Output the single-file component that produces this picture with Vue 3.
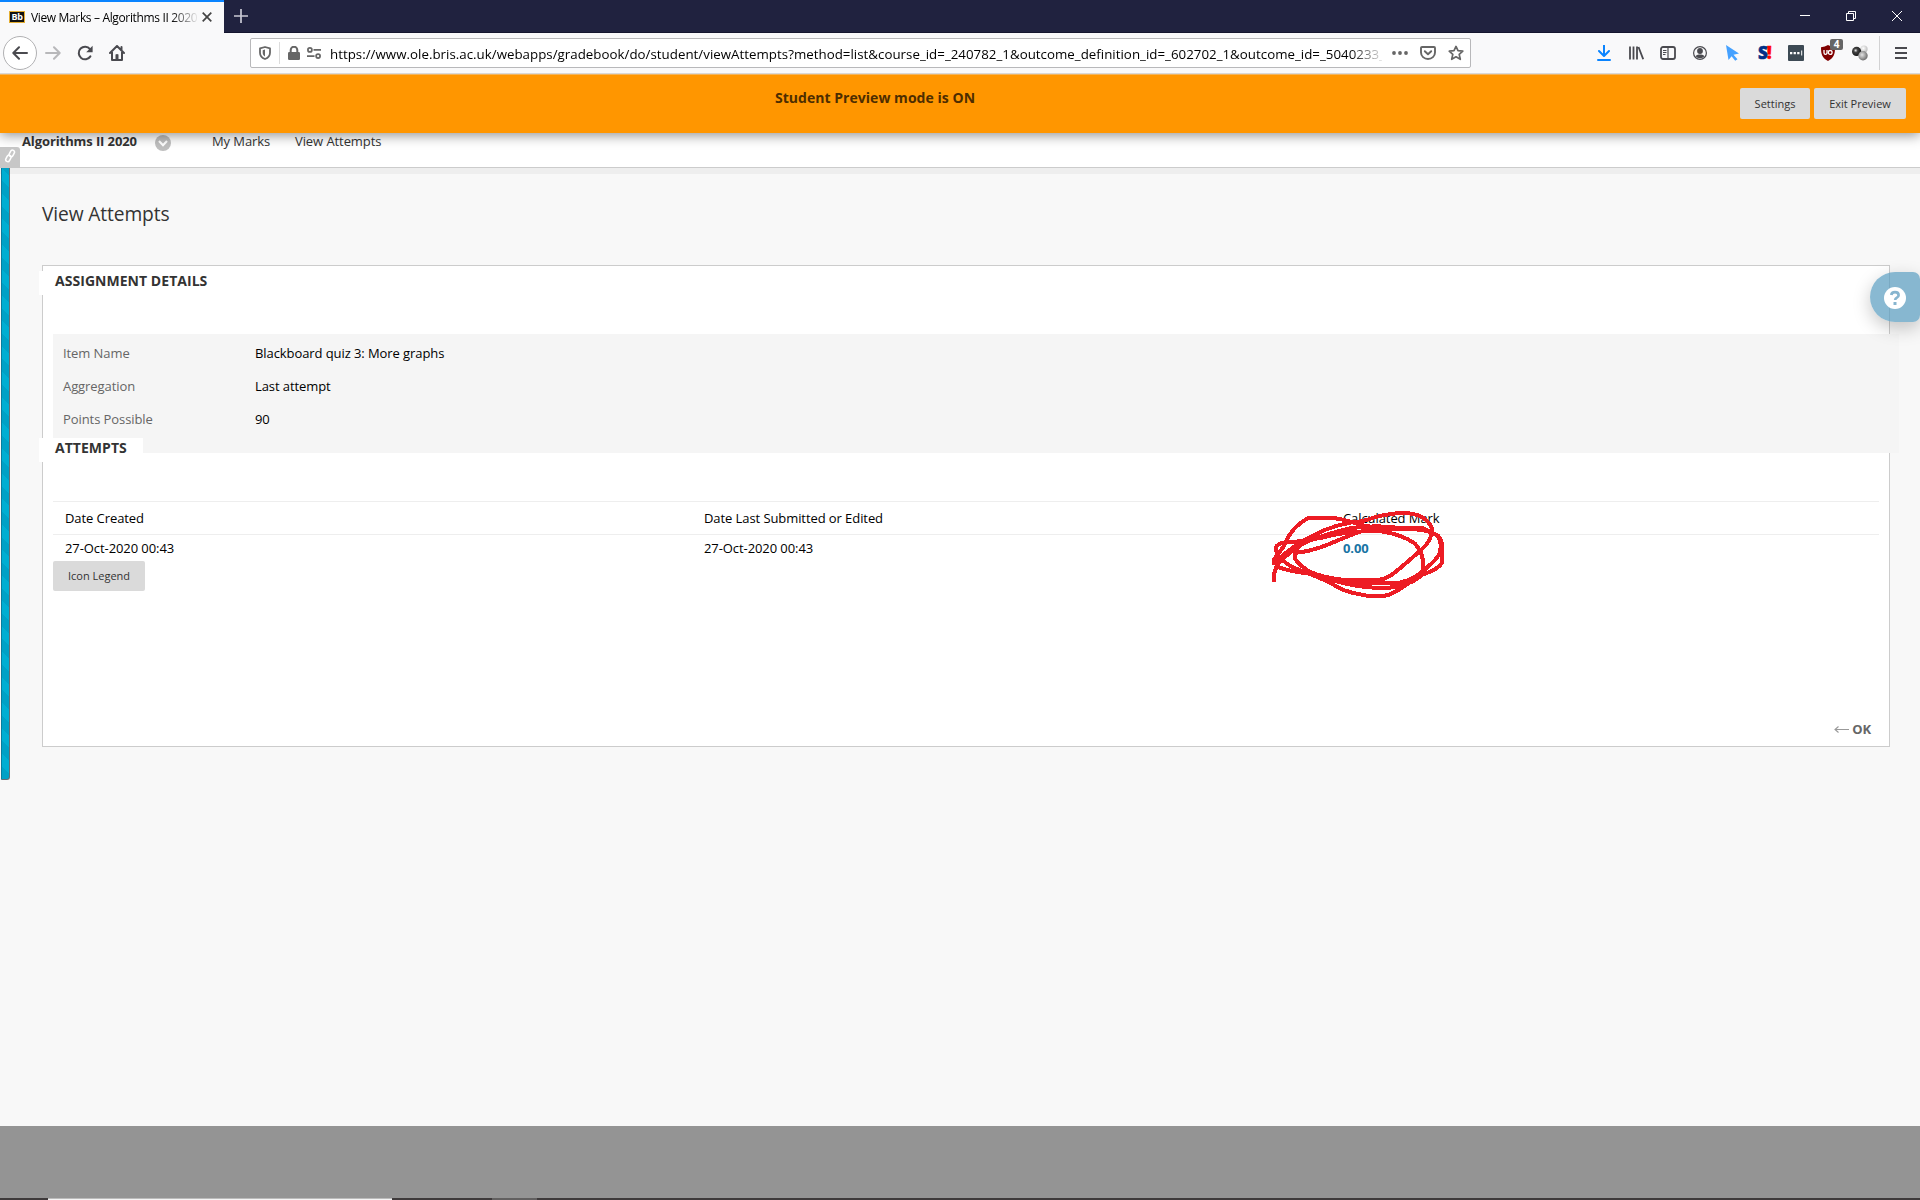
<script setup>
const details = [
  { label: 'Item Name', value: 'Blackboard quiz 3: More graphs' },
  { label: 'Aggregation', value: 'Last attempt' },
  { label: 'Points Possible', value: '90' },
]
const attempts = [
  { created: '27-Oct-2020 00:43', edited: '27-Oct-2020 00:43', mark: '0.00' },
]
const url =
  'https://www.ole.bris.ac.uk/webapps/gradebook/do/student/viewAttempts?method=list&course_id=_240782_1&outcome_definition_id=_602702_1&outcome_id=_5040233_'
</script>

<template>
  <div class="window">
    <header class="titlebar">
      <div class="tab">
        <span class="favicon">Bb</span>
        <span class="tab-title">View Marks – Algorithms II 2020</span>
        <svg class="tab-close" width="10" height="10" viewBox="0 0 10 10"><path d="M.7.7l8.6 8.6M9.3.7L.7 9.3" stroke="#444" stroke-width="1.7" /></svg>
      </div>
      <svg class="new-tab" width="14" height="14" viewBox="0 0 14 14"><path d="M7 0v14M0 7h14" stroke="#c9c9d4" stroke-width="1.7" /></svg>
      <div class="win-controls">
        <svg width="10" height="10" viewBox="0 0 10 10"><path d="M0 4.5h10" stroke="#fff" /></svg>
        <svg width="10" height="10" viewBox="0 0 10 10"><path d="M2.5 2V.5h7v7H8M.5 2.5h7v7h-7z" fill="none" stroke="#fff" /></svg>
        <svg width="10" height="10" viewBox="0 0 10 10"><path d="M0 0l10 10M10 0L0 10" stroke="#fff" /></svg>
      </div>
    </header>

    <nav class="toolbar">
      <div class="nav-buttons">
        <span class="back"><svg width="16" height="16" viewBox="0 0 16 16"><path d="M15 8H1.5M7 2.3L1.3 8 7 13.7" fill="none" stroke="#4a4a4f" stroke-width="2" stroke-linecap="round" stroke-linejoin="round" /></svg></span>
        <svg class="fwd" width="16" height="16" viewBox="0 0 16 16"><path d="M1 8h13.5M9 2.3L14.7 8 9 13.7" fill="none" stroke="#b8b8ba" stroke-width="2" stroke-linecap="round" stroke-linejoin="round" /></svg>
        <svg class="reload" width="16" height="16" viewBox="0 0 16 16"><path d="M13.4 11.4A6.3 6.3 0 1 1 13 4.1" fill="none" stroke="#4a4a4f" stroke-width="2" stroke-linecap="round" /><path d="M15.6.8v6.4H9.2z" fill="#4a4a4f" /></svg>
        <svg class="home" width="16" height="16" viewBox="0 0 16 16"><path d="M1 8l7-7 7 7M3 7v8h10V7M12.5 2v3" fill="none" stroke="#4a4a4f" stroke-width="2" stroke-linecap="round" stroke-linejoin="round" /><path d="M6.5 15V9.5q1.5-1 3 0V15z" fill="#4a4a4f" /></svg>
      </div>
      <div class="urlbar">
        <svg class="shield" width="12" height="14" viewBox="0 0 12 14"><path d="M6 1L11 2.4v4.3c0 3-2 5.200-5 6.300C3 11.900 1 9.700 1 6.700V2.400z" fill="none" stroke="#666" stroke-width="1.8" stroke-linejoin="round" /><path d="M6 3.500L3.700 4.200v2.600C3.700 8.500 4.500 9.700 6 10.500z" fill="#666" /></svg>
        <i class="url-sep"></i>
        <svg class="lock" width="12" height="14" viewBox="0 0 12 14"><path d="M2.700 7V4a3.300 3.300 0 0 1 6.600 0v3" fill="none" stroke="#666" stroke-width="2" /><rect y="6" width="12" height="8" rx="1.200" fill="#666" /></svg>
        <svg class="perms" width="14" height="12" viewBox="0 0 14 12"><g fill="none" stroke="#666" stroke-width="1.700"><circle cx="2.900" cy="2.900" r="2" /><circle cx="11.100" cy="9.100" r="2" /><path d="M6.500 2.900H14M0 9.100h7.500" /></g></svg>
        <span class="url">{{ url }}</span>
        <svg class="dots" width="16" height="4" viewBox="0 0 16 4" fill="#666"><circle cx="2" cy="2" r="1.900" /><circle cx="8" cy="2" r="1.900" /><circle cx="14" cy="2" r="1.900" /></svg>
        <svg class="pocket" width="16" height="14" viewBox="0 0 16 14"><path d="M2 1h12a1 1 0 0 1 1 1v4.500a7 6.500 0 0 1-14 0V2a1 1 0 0 1 1-1z" fill="none" stroke="#666" stroke-width="1.900" /><path d="M4.800 5.200L8 8.300l3.200-3.100" fill="none" stroke="#666" stroke-width="1.900" stroke-linecap="round" stroke-linejoin="round" /></svg>
        <svg class="star" width="16" height="16" viewBox="0 0 16 16"><path d="M8 1.400l2 4.300 4.800.5-3.600 3.200 1.100 4.900L8 11.800l-4.300 2.500 1.100-4.900L1.200 6.200 6 5.700z" fill="none" stroke="#666" stroke-width="1.700" stroke-linejoin="round" /></svg>
      </div>
      <div class="tools">
        <svg width="16" height="16" viewBox="0 0 16 16"><path d="M8 .5v10M3 6l5 5 5-5M2 15h12" fill="none" stroke="#0a84ff" stroke-width="2" stroke-linecap="round" stroke-linejoin="round" /></svg>
        <svg width="16" height="16" viewBox="0 0 16 16"><path d="M2 1.500v13M5.500 1.500v13M9 1.500v13M10.500 2l4.700 12.300" fill="none" stroke="#4a4a4f" stroke-width="1.800" /></svg>
        <svg width="16" height="16" viewBox="0 0 16 16"><g fill="none" stroke="#4a4a4f"><rect x="1" y="2" width="14" height="12" rx="2" stroke-width="1.800" /><path d="M8 2v12M3 5.500h3.500M3 7.500h3.500M3 9.500h2.500" stroke-width="1.200" /></g></svg>
        <svg width="16" height="16" viewBox="0 0 16 16"><circle cx="8" cy="8" r="6.400" fill="none" stroke="#4a4a4f" stroke-width="1.200" /><circle cx="8" cy="6" r="2.900" fill="#4a4a4f" /><path d="M3.500 11.200Q5 9 8 9.600 11 9 12.500 11.200 10.800 13.300 8 13.300T3.500 11.200z" fill="#4a4a4f" /></svg>
        <svg width="16" height="16" viewBox="0 0 16 16"><path d="M2 0l13 8.500-5.500 1.200 4 4.500-2.300 1.600-3.600-4.600L4.500 15z" fill="#45a1ff" /></svg>
        <span class="s-ext">S<b>!</b></span>
        <svg width="16" height="16" viewBox="0 0 16 16"><rect width="16" height="16" rx="1" fill="#3d4a54" /><path d="M2 7h2.300v2.300H2zM5.600 7h2.300v2.300H5.600zM9.200 7h2.300v2.300H9.200zM13.200 5.500h1v5h-1z" fill="#fff" /></svg>
        <span class="ublock">
          <svg width="16" height="16" viewBox="0 0 16 16"><path d="M8 0q3 2 7 2.200c0 7-1 10.500-7 13.800C2 12.700 1 9.200 1 2.200Q5 2 8 0z" fill="#800000" /><path d="M4 5v2.700q0 1.600 1.500 1.600T7 7.700V5" fill="none" stroke="#fff" stroke-width="1.300" /><circle cx="10.200" cy="7.400" r="1.900" fill="none" stroke="#fff" stroke-width="1.300" /></svg>
          <em>4</em>
        </span>
        <svg width="16" height="16" viewBox="0 0 16 16">
          <defs>
            <radialGradient id="ballDark" cx=".4" cy=".4" r=".6"><stop offset="0" stop-color="#eee" /><stop offset=".35" stop-color="#444" /><stop offset="1" stop-color="#161616" /></radialGradient>
            <radialGradient id="ballGray" cx=".4" cy=".4" r=".65"><stop offset="0" stop-color="#e4e4e4" /><stop offset="1" stop-color="#666" /></radialGradient>
            <radialGradient id="ballLight" cx=".4" cy=".4" r=".65"><stop offset="0" stop-color="#fff" /><stop offset="1" stop-color="#b9b9b9" /></radialGradient>
          </defs>
          <circle cx="12" cy="4" r="3.600" fill="url(#ballLight)" /><circle cx="4.600" cy="6.400" r="4.600" fill="url(#ballDark)" /><circle cx="11" cy="10.800" r="4.700" fill="url(#ballGray)" />
        </svg>
        <i class="tool-sep"></i>
        <svg class="menu" width="12" height="12" viewBox="0 0 12 12"><path d="M0 1h12M0 6h12M0 11h12" stroke="#4a4a4f" stroke-width="2" /></svg>
      </div>
    </nav>

    <section class="banner">
      <strong>Student Preview mode is ON</strong>
      <div class="banner-actions">
        <button>Settings</button>
        <button>Exit Preview</button>
      </div>
    </section>

    <div class="crumbs">
      <b>Algorithms II 2020</b>
      <svg width="16" height="16" viewBox="0 0 16 16"><circle cx="8" cy="8" r="8" fill="#bfbfbf" /><path d="M4 6l4 4.200L12 6" fill="none" stroke="#fff" stroke-width="2.200" /></svg>
      <span class="crumb">My Marks</span>
      <span>View Attempts</span>
      <div class="link-tab"><svg width="12" height="14" viewBox="0 0 12 14"><g fill="none" stroke="#fff" stroke-width="1.500"><rect x="5.800" y="1" width="4" height="6.800" rx="2" transform="rotate(28 7.800 4.400)" /><rect x="2.400" y="6" width="4" height="6.800" rx="2" transform="rotate(28 4.400 9.400)" /></g></svg></div>
    </div>

    <div class="page">
      <aside class="side"></aside>
      <main>
        <h1>View Attempts</h1>
        <div class="card">
          <h2>ASSIGNMENT DETAILS</h2>
          <dl>
            <div v-for="d in details" :key="d.label">
              <dt>{{ d.label }}</dt>
              <dd>{{ d.value }}</dd>
            </div>
          </dl>
          <h2 class="second">ATTEMPTS</h2>
          <div class="grid">
            <div class="row head">
              <span>Date Created</span><span>Date Last Submitted or Edited</span><span>Calculated Mark</span>
            </div>
            <div v-for="a in attempts" :key="a.created" class="row">
              <span>{{ a.created }}</span><span>{{ a.edited }}</span><b>{{ a.mark }}</b>
            </div>
            <svg class="scribble" width="220" height="120" viewBox="0 0 660 360" shape-rendering="crispEdges">
              <g fill="none" stroke="#ed1c24" stroke-width="12" stroke-linejoin="round">
                <path d="M72 274V250L80 225Q95 200 150 165" />
                <path d="M72 222V205L100 168Q125 105 178 80H240Q280 84 310 95Q370 114 455 115Q530 112 560 132Q580 145 577 180V215Q565 235 515 252Q480 285 410 291Q320 291 250 268L180 248Q110 240 76 225" />
                <path d="M130 230Q85 205 78 178Q75 160 100 155Q180 150 250 132Q320 118 395 121Q460 132 495 158Q525 190 518 238Q475 285 420 310Q385 323 330 310Q280 302 245 278Q200 255 130 230" />
                <path d="M75 215Q125 165 190 133Q260 96 340 90Q400 68 455 66Q525 65 545 110Q550 145 515 175Q465 220 430 248Q405 268 365 268H290Q215 260 175 240Q125 205 136 190Q135 165 180 148Q240 125 300 112Q380 100 455 112H520L565 135Q585 180 550 212Q500 265 450 275Q350 280 260 268" />
                <path d="M130 186Q180 183 235 160Q295 135 330 122" />
              </g>
            </svg>
          </div>
          <button class="legend">Icon Legend</button>
          <div class="ok">
            <svg width="15" height="7" viewBox="0 0 15 7"><path d="M15 3.500H1M4.500.5L1 3.500l3.500 3" fill="none" stroke="#999" stroke-width="1.100" /></svg>
            <b>OK</b>
          </div>
        </div>
      </main>
      <div class="help"><svg width="22" height="22" viewBox="0 0 22 22"><circle cx="11" cy="11" r="11" fill="#fff" /><path d="M7.300 8Q7.600 5.200 11 5.200q3.600 0 3.600 3 0 1.500-1.700 2.400-1.700.9-1.700 2.400" fill="none" stroke="#87b5cf" stroke-width="2.700" /><path d="M9.500 15h3v3h-3z" fill="#87b5cf" /></svg></div>
    </div>
    <div class="desktop"></div>
    <footer class="taskbar"><i class="active"></i><i class="item"></i></footer>
  </div>
</template>

<style>
body { margin: 0; overflow: hidden; }
</style>

<style scoped>
* { box-sizing: border-box; }
.window { width: 1920px; height: 1200px; display: flex; flex-direction: column; overflow: hidden; background: #f8f8f8; font: 13px/18px "Open Sans", sans-serif; letter-spacing: -.08px; color: #000; }
.window svg { display: block; flex: none; }
.titlebar { height: 33px; flex: none; display: flex; background: #20223f; border-bottom: 1px solid #14152e; }
.tab { width: 224px; height: 33px; flex: none; display: flex; align-items: center; background: #f9f9fa; border-top: 2px solid #0a84ff; padding: 0 0 1px 9px; }
.favicon { width: 16px; height: 12px; flex: none; background: #111; border: 1px solid #e4ae31; color: #fff; font: bold 9px/9px "Open Sans", sans-serif; text-align: center; letter-spacing: -.4px; }
.tab-title { width: 166px; margin-left: 6px; padding-top: 1px; overflow: hidden; white-space: nowrap; font-size: 12px; letter-spacing: -.35px; -webkit-mask-image: linear-gradient(90deg, #000 140px, transparent 168px); mask-image: linear-gradient(90deg, #000 140px, transparent 168px); }
.tab-close { margin-left: 5px; }
.new-tab { margin: 9px 0 0 10px; }
.win-controls { display: flex; gap: 36px; margin: 11px 18px 0 auto; }
.toolbar { position: relative; z-index: 4; height: 41px; flex: none; display: flex; background: #f9f9fa; border-bottom: 1px solid #d9d8d6; }
.nav-buttons { width: 250px; flex: none; display: flex; align-items: center; padding-left: 3px; padding-bottom: 1px; }
.back { width: 34px; height: 34px; display: flex; align-items: center; justify-content: center; border: 1px solid #b1b1b3; border-radius: 50%; background: #fff; margin-top: 1px; }
.fwd { margin-left: 8px; }
.reload { margin-left: 16px; }
.home { margin-left: 16px; }
.urlbar { width: 1221px; height: 30px; margin-top: 5px; flex: none; display: flex; align-items: center; border: 1px solid #b8b8ba; border-radius: 2px; background: #fff; }
.shield { margin-left: 8px; }
.url-sep { width: 1px; height: 22px; margin-left: 8px; background: #dcdcdc; }
.lock { margin-left: 8px; }
.perms { margin-left: 7px; }
.url { width: 1052px; margin-left: 9px; padding-top: 1px; overflow: hidden; white-space: nowrap; font-size: 13.3px; letter-spacing: .02px; -webkit-mask-image: linear-gradient(90deg, #000 1020px, transparent 1056px); mask-image: linear-gradient(90deg, #000 1020px, transparent 1056px); }
.dots { margin-left: 10px; }
.pocket { margin-left: 12px; }
.star { margin-left: 12px; }
.tools { display: flex; align-items: center; gap: 16px; margin-left: auto; padding-right: 13px; padding-bottom: 1px; }
.s-ext { width: 16px; padding-left: 2px; font: 900 17px/16px "Open Sans", sans-serif; color: #003087; letter-spacing: -1px; white-space: nowrap; -webkit-text-stroke: .5px #003087; }
.s-ext b { color: #f00; -webkit-text-stroke: .5px #f00; }
.ublock { position: relative; }
.ublock em { position: absolute; left: 10px; top: -6px; width: 13px; height: 11px; border-radius: 2px; background: #666; color: #fff; font: bold 10px/11px "Open Sans", sans-serif; text-align: center; }
.tool-sep { width: 1px; height: 34px; margin: 0 -1px 0 -5px; background: #d2d2d3; }
.banner { position: relative; z-index: 3; height: 59px; flex: none; display: flex; justify-content: center; background: linear-gradient(#f3b45c 0 1px, #ff9600 1px); box-shadow: 0 2px 12px rgba(0, 0, 0, .45); }
.banner strong { width: 1750px; margin-right: -10px; padding: 14px 0 0; text-align: center; font-size: 14px; letter-spacing: .04px; line-height: 20px; color: #4d2d00; flex: none; }
button { border: 0; border-radius: 2px; background: #dadada; color: #333; font: 11px/15px "Open Sans", sans-serif; padding: 0; }
.banner-actions { display: flex; gap: 4px; width: 180px; padding-top: 14px; flex: none; }
.banner-actions button { width: 70px; height: 31px; }
.banner-actions button + button { width: 92px; }
.crumbs { position: relative; height: 35px; flex: none; display: flex; padding-left: 22px; background: #fff; border-bottom: 1px solid #ccc; color: #333; line-height: 17px; }
.crumbs b { width: 133px; letter-spacing: -.1px; }
.crumbs svg { margin-top: 2px; }
.crumb { width: 83px; margin-left: 41px; }
.link-tab { position: absolute; left: 0; top: 14px; width: 20px; height: 21px; border-radius: 0 3px 0 0; background: #c7c7c7; padding-left: 4px; }
.page { position: relative; height: 958px; flex: none; display: flex; background: linear-gradient(#eee 0 6px, #f8f8f8 6px); }
.side { width: 9px; height: 612px; margin: 0 0 0 1px; flex: none; border: 1px solid #666e74; border-left: 1px solid #087d9d; border-top: 0; border-radius: 0 0 3px 0; background: repeating-linear-gradient(45deg, #00a1c6 0 9px, #00aed2 9px 18px); z-index: 1; }
main { width: 1848px; margin-left: 32px; }
h1 { margin: 30px 0 0; height: 67px; font-size: 19.2px; font-weight: 400; letter-spacing: -.12px; line-height: 32px; color: #333; }
.card { width: 1848px; height: 482px; border: 1px solid #ccc; background: #fff; }
h2 { width: 180px; height: 24px; margin: 5px 0 0 -4px; padding-left: 16px; background: #fff; color: #333; font-size: 14px; letter-spacing: .04px; line-height: 19px; white-space: nowrap; }
dl { width: 1846px; height: 119px; margin: 39px 0 0 10px; padding: 3px 0 0 10px; background: #f5f5f5; }
dl div { display: flex; height: 33px; line-height: 33px; }
dt { width: 192px; color: #666; }
dd { margin: 0; }
.second { position: relative; width: 104px; margin-top: -15px; line-height: 20px; }
.grid { position: relative; width: 1826px; margin: 39px 0 0 10px; border-top: 1px solid #eee; }
.row { display: grid; grid-template-columns: 639px 639px 1fr; padding-left: 12px; height: 26px; line-height: 26px; }
.head { height: 33px; border-bottom: 1px solid #eee; line-height: 32px; }
.row b { color: #1874a4; }
.scribble { position: absolute; left: 1197px; top: -11px; }
.legend { display: block; width: 92px; height: 30px; margin-left: 10px; padding-bottom: 2px; }
.ok { display: flex; align-items: center; justify-content: flex-end; gap: 3px; margin: 129px 18px 0 0; color: #666; }
.help { position: absolute; left: 1870px; top: 104px; width: 50px; height: 50px; padding: 15px 0 0 14px; border-radius: 25px 7px 7px 25px; background: rgba(87, 155, 191, .7); box-shadow: 0 6px 18px rgba(0, 0, 0, .22); }
.desktop { height: 72px; flex: none; background: #949494; }
.taskbar { height: 2px; flex: none; display: flex; background: #3e3a3b; }
.active { width: 344px; margin-left: 48px; background: #f4f4f4; border-top: 1px solid #bbb; }
.item { width: 45px; margin-left: 100px; background: #626060; }
</style>
